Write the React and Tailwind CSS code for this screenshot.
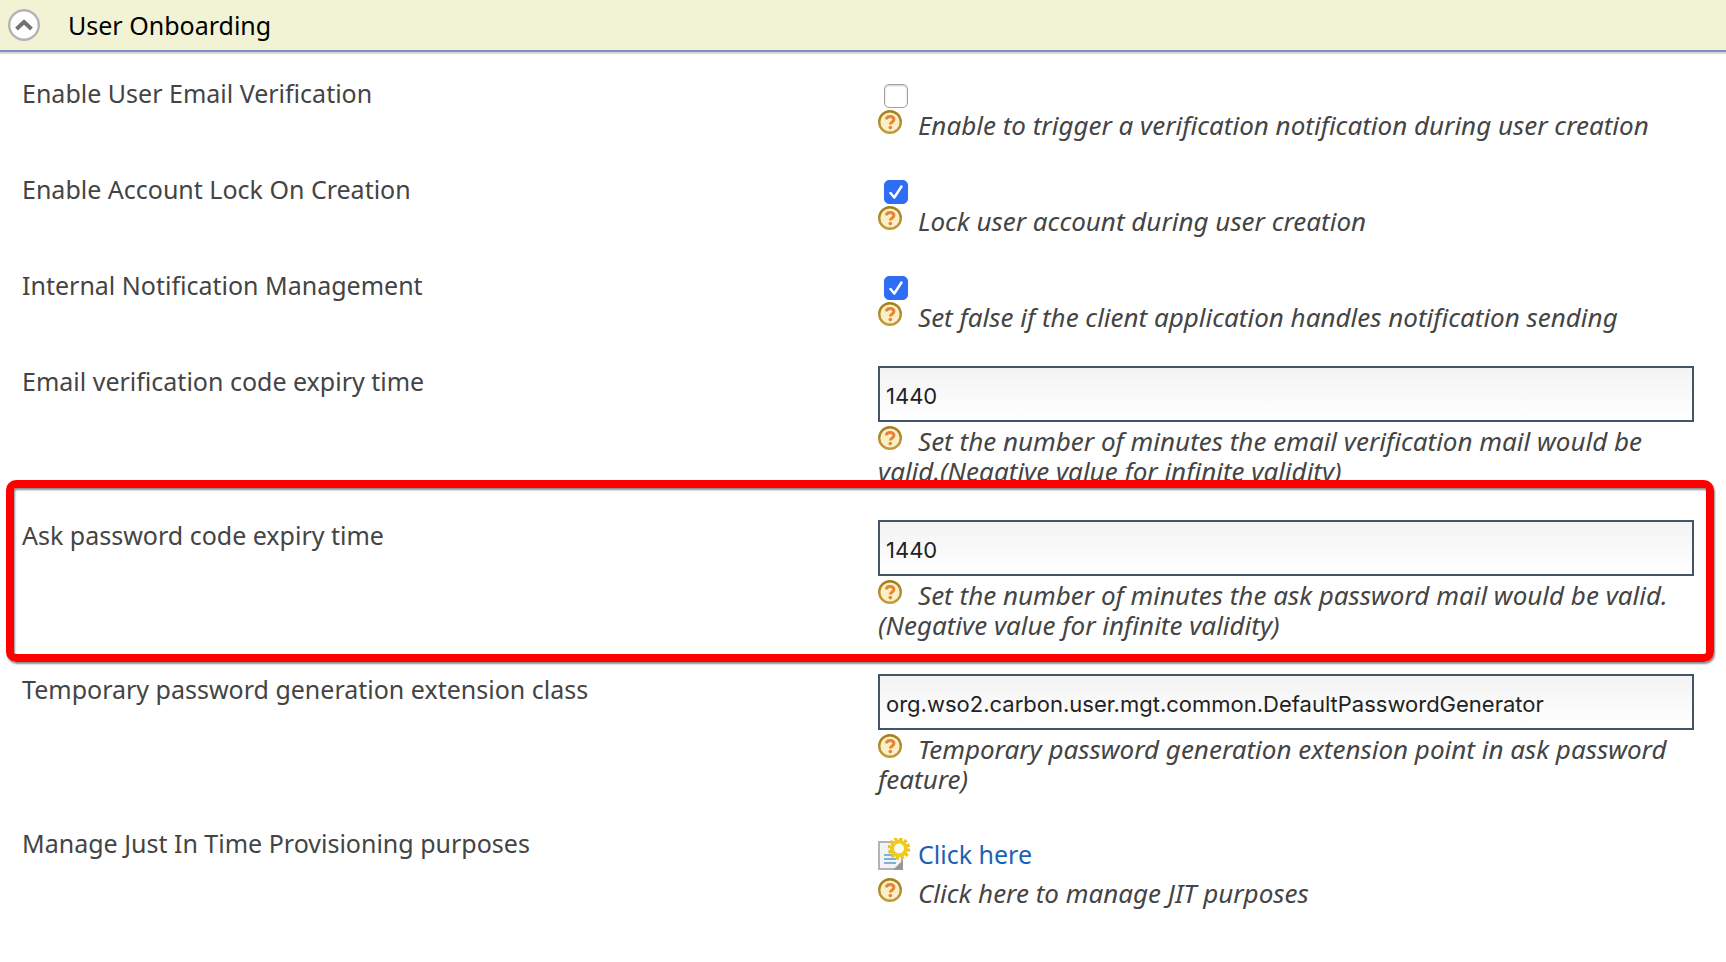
const HelpIcon = () => (
  <svg viewBox="0 0 24 24" className="mr-4 inline-block size-6 align-top" aria-hidden="true">
    <defs>
      <linearGradient id="ring" x1="0" y1="0" x2="0" y2="1">
        <stop offset="0" stopColor="#a67c1e" />
        <stop offset="1" stopColor="#c29a3e" />
      </linearGradient>
    </defs>
    <circle cx="12" cy="12" r="10.8" fill="#fbf0c4" stroke="url(#ring)" strokeWidth="2.4" />
    <path d="M8.300 9.400C8.500 7.300 10 6.500 12 6.500c2.300 0 3.900 1 3.900 3 0 2.600-3.500 2.300-3.500 5" fill="none" stroke="#e8843a" strokeWidth="3" />
    <circle cx="12.300" cy="17.600" r="1.800" fill="#e8843a" />
  </svg>
);

const DocIcon = () => (
  <svg viewBox="0 0 32 32" className="size-8" aria-hidden="true">
    <path d="M1 4h23v27H1z" fill="#f1f3f5" stroke="#b0b3b8" strokeWidth="2" />
    <path d="M15 32 25 22v10z" fill="#94979d" />
    <path d="M6 17h8M6 21h12M6 25h12" stroke="#7fb0d8" strokeWidth="2" />
    <circle cx="21" cy="10.500" r="9.800" fill="none" stroke="#e9c321" strokeWidth="3" strokeDasharray="3.130 2" />
    <circle cx="21" cy="10.500" r="7" fill="#fffdf0" stroke="#efcb1f" strokeWidth="4" />
  </svg>
);

const Help = ({ children }) => (
  <p className="text-[26px] leading-[30px] italic">
    <HelpIcon />
    {children}
  </p>
);

const CheckField = ({ id, checked, help }) => (
  <>
    <div className="flex h-8 items-start pt-1.5 pl-1.5">
      <input
        id={id}
        type="checkbox"
        defaultChecked={checked}
        className="peer size-6 appearance-none rounded-[5px] border border-[#a0a0a0] bg-white shadow-[inset_0_1px_2px_rgba(0,0,0,0.2)] checked:border-[#2f6df6] checked:bg-[#2f6df6] checked:shadow-none"
      />
      <svg viewBox="0 0 24 24" className="pointer-events-none -ml-6 hidden size-6 peer-checked:block" aria-hidden="true">
        <path d="M6.500 13 10.300 17.500 17.500 6.500" fill="none" stroke="#fff" strokeWidth="2.500" strokeLinecap="round" strokeLinejoin="round" />
      </svg>
    </div>
    <Help>{help}</Help>
  </>
);

const TextField = ({ id, value, help }) => (
  <>
    <input
      id={id}
      type="text"
      defaultValue={value}
      className="mb-1 block h-14 w-full border-2 border-[#445569] bg-linear-to-b from-[#f3f3f3] to-white px-1.5 pt-1 font-['Inter','Liberation_Sans',sans-serif] text-[22px] text-[#222]"
    />
    <Help>{help}</Help>
  </>
);

const Row = ({ id, label, highlighted, children }) => (
  <div className="relative grid grid-cols-2 gap-10">
    {id ? <label htmlFor={id} className="text-[25px] leading-[30px]">{label}</label> : <span className="text-[25px] leading-[30px]">{label}</span>}
    <div>{children}</div>
    {highlighted && (
      <div className="pointer-events-none absolute -top-10 -right-5 -bottom-[22px] -left-4 rounded-[10px] border-8 border-[#ff0000] shadow-[1px_2px_2px_rgba(0,0,0,0.45),inset_1px_2px_2px_rgba(0,0,0,0.45)]" />
    )}
  </div>
);

export default function App() {
  return (
    <main className="min-h-screen bg-white font-['Noto_Sans','Open_Sans',sans-serif] text-[#444]">
      <div className="border-b-2 border-[#d8d8dc]">
        <h2 className="border-b-2 border-[#7d92bb] bg-[#f2f3d5] text-[25px] leading-[50px] font-normal text-black">
          <button type="button" className="flex w-full items-center gap-7 pl-2 text-left">
            <svg viewBox="0 0 32 32" className="size-8" aria-hidden="true">
              <circle cx="16" cy="16" r="14.800" fill="#fff" stroke="#b4b4b4" strokeWidth="2.400" />
              <path d="M8.500 20 16 13 23.500 20" fill="none" stroke="#737373" strokeWidth="4" />
            </svg>
            User Onboarding
          </button>
        </h2>
      </div>
      <form className="flex flex-col gap-[34px] pt-6 pr-8 pb-12 pl-[22px]">
        <Row id="verify" label="Enable User Email Verification">
          <CheckField id="verify" help="Enable to trigger a verification notification during user creation" />
        </Row>
        <Row id="lock" label="Enable Account Lock On Creation">
          <CheckField id="lock" checked help="Lock user account during user creation" />
        </Row>
        <Row id="internal" label="Internal Notification Management">
          <CheckField id="internal" checked help="Set false if the client application handles notification sending" />
        </Row>
        <Row id="email-expiry" label="Email verification code expiry time">
          <TextField id="email-expiry" value="1440" help="Set the number of minutes the email verification mail would be valid.(Negative value for infinite validity)" />
        </Row>
        <Row id="ask-expiry" label="Ask password code expiry time" highlighted>
          <TextField id="ask-expiry" value="1440" help="Set the number of minutes the ask password mail would be valid.(Negative value for infinite validity)" />
        </Row>
        <Row id="generator" label="Temporary password generation extension class">
          <TextField id="generator" value="org.wso2.carbon.user.mgt.common.DefaultPasswordGenerator" help="Temporary password generation extension point in ask password feature)" />
        </Row>
        <Row label="Manage Just In Time Provisioning purposes">
          <a href="#purposes" className="mt-2.5 mb-2 flex h-8 items-center gap-2 text-[25px] leading-[30px] text-[#1a62b3]">
            <DocIcon />
            Click here
          </a>
          <Help>Click here to manage JIT purposes</Help>
        </Row>
      </form>
    </main>
  );
}
